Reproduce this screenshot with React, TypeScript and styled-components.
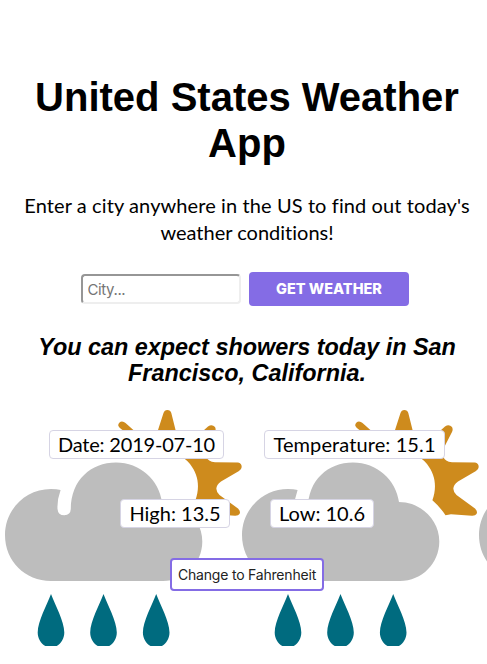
import React from "react";
import styled, { createGlobalStyle } from "styled-components";

const GlobalStyle = createGlobalStyle`
  * { box-sizing: border-box; }
  html, body { margin: 0; background: #fff; }
  body { overflow: hidden; }
`;

const Page = styled.main`
  width: 487px;
  height: 664px;
  padding-top: 74px;
  overflow: hidden;
  color: #000;
  text-align: center;
  font-family: Lato, sans-serif;
  font-variant-ligatures: none;
`;

const Title = styled.h1`
  margin: 0;
  font: 700 40px/46px "Liberation Sans", Arial, sans-serif;
`;

const Line = styled.span<{ $spacing?: number }>`
  display: block;
  white-space: nowrap;
  letter-spacing: ${(p) => p.$spacing ?? 0}px;
  padding-left: 7px;
`;

const Intro = styled.p`
  margin: 26px 0 0;
  font-size: 20px;
  line-height: 27px;
`;

const Form = styled.form`
  display: flex;
  align-items: center;
  gap: 8px;
  margin: 26px 0 0 81px;
`;

const CityInput = styled.input`
  width: 160px;
  height: 30px;
  padding: 1px 4.5px;
  border: 2px solid #eee;
  border-color: #969696 #eee #eee #969696;
  border-radius: 4px;
  background: #fff;
  font: 400 15px/20px Inter, sans-serif;
  letter-spacing: -0.4px;
  &::placeholder { color: #757575; opacity: 1; }
`;

const SubmitButton = styled.button`
  width: 160px;
  height: 34px;
  padding: 0;
  border: 0;
  border-radius: 4px;
  background: #846ce5;
  color: #fff;
  font: 800 14.5px/20px Inter, sans-serif;
`;

const Forecast = styled.h2`
  margin: 28px 0 0;
  font: italic 700 23.4px/26px "Liberation Sans", Arial, sans-serif;
`;

const Conditions = styled.section`
  position: relative;
  height: 237px;
  margin-top: 23px;
  padding-top: 21px;
  overflow: hidden;
`;

const Backdrop = styled.div`
  position: absolute;
  inset: 0 0 0 5px;
  display: flex;
  z-index: 0;
  svg { flex: none; display: block; }
`;

const ReadingRow = styled.div<{ $gap: number; $start: number }>`
  position: relative;
  display: flex;
  gap: ${(p) => p.$gap}px;
  margin: 0 0 40px ${(p) => p.$start}px;
`;

const Reading = styled.span<{ $width: number; $spacing?: number }>`
  width: ${(p) => p.$width}px;
  height: 29px;
  border: 1px solid #d6d4e4;
  border-radius: 4px;
  background: #fff;
  font-size: 20px;
  line-height: 26px;
  white-space: nowrap;
  letter-spacing: ${(p) => p.$spacing ?? 0}px;
`;

const UnitButton = styled.button`
  position: relative;
  display: block;
  width: 154px;
  height: 33px;
  margin: -10px 0 0 170px;
  padding: 0;
  border: 2px solid #846ce5;
  border-radius: 4px;
  background: #fff;
  color: #222;
  font: 400 14px/20px Inter, sans-serif;
  letter-spacing: -0.2px;
  white-space: nowrap;
`;

function ShowersTile() {
  return (
    <svg width="237" height="237" viewBox="5 409 237 237" aria-hidden="true">
      <path
        fill="#ce8b1d"
        d="M157.700 431L163.500 413Q164.500 410 167.300 410Q170.500 410 171.300 413L175.800 431Q178 437 185 435L203 431L208 426.500Q212 424 215 427Q216.300 429.500 215 432L207.300 447L206 456Q208 462 215 462.300L238 462.500Q241.700 463 241.700 467Q241.500 469.500 239 471L221 481.500Q212.500 488 219.500 495L238 508.500Q241 511.500 239.500 514Q238.500 515.800 235 515.700L214 514.300L208.500 515.200Q203 507 195.400 500.300C200 487 198.500 475 190 464C182 454 168 450 150 452L131 445L134.500 431L124 431Q118 427 118.200 425Q119 421.700 122 421.600Q124 421.700 125.500 423L134.500 431Z"
      />
      <path
        fill="#bdbdbd"
        d="M51 489Q57 489 60.600 490Q57 500 57.500 509Q58 515.300 64.300 515.300Q70.500 515 70.800 509C71 480 91 462.500 116 462.500C140 462.500 159 480 162 502C184 502 202.300 520 202.300 541.500C202.300 563 185 581 163 581H51C25 581 5 561 5 535C5 510 25 489 51 489Z"
      />
      <g fill="#006b7f">
        {[51, 103.5, 156.2].map((x) => (
          <path
            key={x}
            d={`M${x} 594C${x + 4} 605 ${x + 13.3} 621 ${x + 13.3} 632.500C${x + 13.3} 641 ${x + 7} 647.500 ${x} 647.500C${x - 7} 647.500 ${x - 13.3} 641 ${x - 13.3} 632.500C${x - 13.3} 621 ${x - 4} 605 ${x} 594Z`}
          />
        ))}
      </g>
    </svg>
  );
}

export default function App() {
  return (
    <>
      <GlobalStyle />
      <Page>
        <Title>
          <Line>United States Weather</Line>
          <Line>App</Line>
        </Title>
        <Intro>
          <Line $spacing={0.1}>Enter a city anywhere in the US to find out today's</Line>
          <Line>weather conditions!</Line>
        </Intro>
        <Form onSubmit={(e) => e.preventDefault()}>
          <CityInput placeholder="City..." aria-label="City" />
          <SubmitButton type="submit">GET WEATHER</SubmitButton>
        </Form>
        <Forecast>
          <Line>You can expect showers today in San</Line>
          <Line>Francisco, California.</Line>
        </Forecast>
        <Conditions>
          <Backdrop>
            <ShowersTile />
            <ShowersTile />
            <ShowersTile />
          </Backdrop>
          <ReadingRow $start={49} $gap={40}>
            <Reading $width={175} $spacing={-0.2}>Date: 2019-07-10</Reading>
            <Reading $width={181} $spacing={0.1}>Temperature: 15.1</Reading>
          </ReadingRow>
          <ReadingRow $start={120} $gap={40}>
            <Reading $width={110}>High: 13.5</Reading>
            <Reading $width={104}>Low: 10.6</Reading>
          </ReadingRow>
          <UnitButton type="button">Change to Fahrenheit</UnitButton>
        </Conditions>
      </Page>
    </>
  );
}
